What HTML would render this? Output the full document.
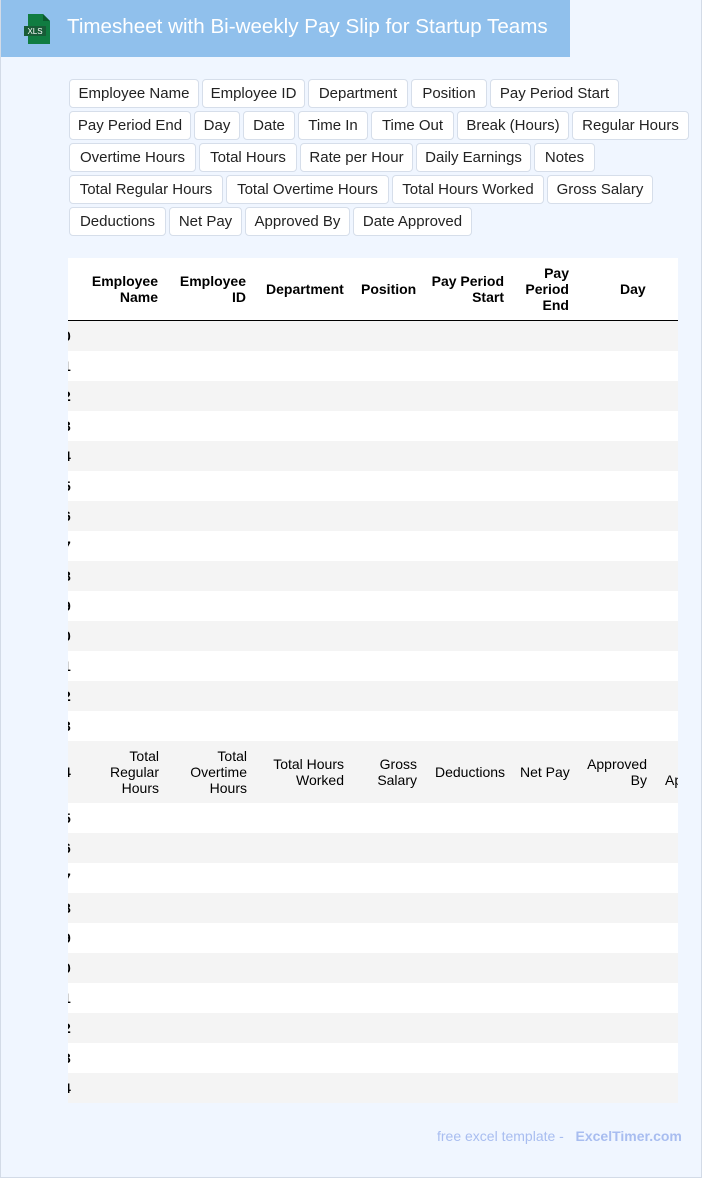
<!DOCTYPE html>
<html><head><meta charset="utf-8"><style>
*{margin:0;padding:0;box-sizing:border-box}
body{width:702px;height:1178px;background:#f0f6ff;font-family:"Liberation Sans",Arial,sans-serif;position:relative;overflow:hidden}
.frame{position:absolute;left:0;top:0;width:702px;height:1178px;border:1px solid #d3dbe7;border-top:none}
.hdr{position:absolute;left:1px;top:0;width:569px;height:57px;background:#90c0ec}
.hdr .t{position:absolute;left:66px;top:15px;color:#fff;font-size:20.6px;white-space:nowrap}
.chip{position:absolute;height:29px;background:#fff;border:1px solid #d6deea;border-radius:4px;font-size:15px;color:#222;line-height:27px;text-align:center;white-space:nowrap}
.tbl{position:absolute;left:68px;top:258px;width:610px;height:845px;background:#fff;overflow:hidden}
.row{position:absolute;left:0;width:610px;height:30px}
.g{background:#f4f4f4}
.n{position:absolute;left:-5px;font-size:14px;font-weight:bold;color:#000;line-height:30px}
.h{position:absolute;font-size:14px;line-height:16px;color:#000;white-space:nowrap}
.b{font-weight:bold}
.r{text-align:right}
.foot{position:absolute;top:1128px;left:437px;font-size:14px;color:#a8bdf0;white-space:nowrap}
</style></head><body>
<div class="frame"></div>
<div class="hdr">
<svg style="position:absolute;left:21px;top:13px" width="30" height="32" viewBox="0 0 30 32"><path d="M6 1h15l7 7v23H6z" fill="#107c41"/><path d="M21 1v7h7z" fill="#0b5a2f"/><rect x="2" y="13" width="22" height="10" fill="#185c37"/><text x="13" y="21" font-size="8" fill="#fff" text-anchor="middle" font-family="Liberation Sans">XLS</text></svg>
<div class="t">Timesheet with Bi-weekly Pay Slip for Startup Teams</div></div>

<div class="chip" style="left:69px;top:79px;width:130px">Employee Name</div>
<div class="chip" style="left:202px;top:79px;width:103px">Employee ID</div>
<div class="chip" style="left:308px;top:79px;width:100px">Department</div>
<div class="chip" style="left:411px;top:79px;width:76px">Position</div>
<div class="chip" style="left:490px;top:79px;width:129px">Pay Period Start</div>

<div class="chip" style="left:69px;top:111px;width:122px">Pay Period End</div>
<div class="chip" style="left:194px;top:111px;width:46px">Day</div>
<div class="chip" style="left:243px;top:111px;width:52px">Date</div>
<div class="chip" style="left:298px;top:111px;width:70px">Time In</div>
<div class="chip" style="left:371px;top:111px;width:83px">Time Out</div>
<div class="chip" style="left:457px;top:111px;width:112px">Break (Hours)</div>
<div class="chip" style="left:572px;top:111px;width:117px">Regular Hours</div>

<div class="chip" style="left:69px;top:143px;width:127px">Overtime Hours</div>
<div class="chip" style="left:199px;top:143px;width:98px">Total Hours</div>
<div class="chip" style="left:300px;top:143px;width:113px">Rate per Hour</div>
<div class="chip" style="left:416px;top:143px;width:115px">Daily Earnings</div>
<div class="chip" style="left:534px;top:143px;width:61px">Notes</div>

<div class="chip" style="left:69px;top:175px;width:154px">Total Regular Hours</div>
<div class="chip" style="left:226px;top:175px;width:163px">Total Overtime Hours</div>
<div class="chip" style="left:392px;top:175px;width:152px">Total Hours Worked</div>
<div class="chip" style="left:547px;top:175px;width:106px">Gross Salary</div>

<div class="chip" style="left:69px;top:207px;width:97px">Deductions</div>
<div class="chip" style="left:169px;top:207px;width:73px">Net Pay</div>
<div class="chip" style="left:245px;top:207px;width:105px">Approved By</div>
<div class="chip" style="left:353px;top:207px;width:119px">Date Approved</div>

<div class="tbl">
<div style="position:absolute;left:0;top:62px;width:610px;height:1px;background:#000"></div>
<div class="h b r" style="right:520px;top:15px">Employee<br>Name</div>
<div class="h b r" style="right:432px;top:15px">Employee<br>ID</div>
<div class="h b" style="left:198px;top:23px">Department</div>
<div class="h b" style="left:293px;top:23px">Position</div>
<div class="h b r" style="right:174px;top:15px">Pay Period<br>Start</div>
<div class="h b r" style="right:109px;top:7px">Pay<br>Period<br>End</div>
<div class="h b" style="left:552px;top:23px">Day</div>

<div class="row g" style="top:63px"><span class="n">0</span></div>
<div class="row" style="top:93px"><span class="n">1</span></div>
<div class="row g" style="top:123px"><span class="n">2</span></div>
<div class="row" style="top:153px"><span class="n">3</span></div>
<div class="row g" style="top:183px"><span class="n">4</span></div>
<div class="row" style="top:213px"><span class="n">5</span></div>
<div class="row g" style="top:243px"><span class="n">6</span></div>
<div class="row" style="top:273px"><span class="n">7</span></div>
<div class="row g" style="top:303px"><span class="n">8</span></div>
<div class="row" style="top:333px"><span class="n">9</span></div>
<div class="row g" style="top:363px"><span class="n">0</span></div>
<div class="row" style="top:393px"><span class="n">1</span></div>
<div class="row g" style="top:423px"><span class="n">2</span></div>
<div class="row" style="top:453px"><span class="n">3</span></div>
<div class="row g" style="top:483px;height:62px"><span class="n" style="line-height:62px">4</span>
<div class="h r" style="right:519px;top:7px">Total<br>Regular<br>Hours</div>
<div class="h r" style="right:431px;top:7px">Total<br>Overtime<br>Hours</div>
<div class="h r" style="right:334px;top:15px">Total Hours<br>Worked</div>
<div class="h r" style="right:261px;top:15px">Gross<br>Salary</div>
<div class="h" style="left:367px;top:23px">Deductions</div>
<div class="h" style="left:452px;top:23px">Net Pay</div>
<div class="h r" style="right:31px;top:15px">Approved<br>By</div>
<div class="h" style="left:597px;top:31px">Approved</div>
</div>
<div class="row" style="top:545px"><span class="n">5</span></div>
<div class="row g" style="top:575px"><span class="n">6</span></div>
<div class="row" style="top:605px"><span class="n">7</span></div>
<div class="row g" style="top:635px"><span class="n">8</span></div>
<div class="row" style="top:665px"><span class="n">9</span></div>
<div class="row g" style="top:695px"><span class="n">0</span></div>
<div class="row" style="top:725px"><span class="n">1</span></div>
<div class="row g" style="top:755px"><span class="n">2</span></div>
<div class="row" style="top:785px"><span class="n">3</span></div>
<div class="row g" style="top:815px"><span class="n">4</span></div>
</div>
<div class="foot">free excel template - &nbsp;&nbsp;<b>ExcelTimer.com</b></div>
</body></html>
